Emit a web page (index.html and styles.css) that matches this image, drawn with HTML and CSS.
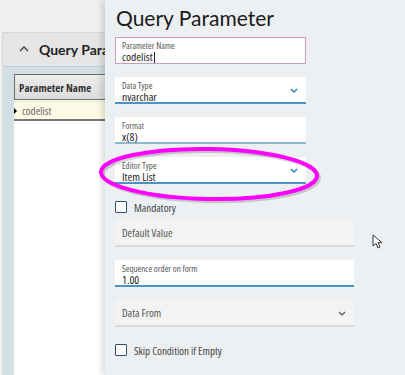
FILE: index.html
```html
<!DOCTYPE html>
<html lang="en">

<head>
    <meta charset="UTF-8">
    <meta name="viewport" content="width=device-width, initial-scale=1.0">
    <title>Query Parameter</title>
    <link rel="stylesheet" href="styles.css">
</head>

<body>
    <!-- page behind the drawer -->
    <div class="back">
        <div class="back-panel">
            <div class="back-header">
                <svg class="chev-up" width="10" height="6" viewBox="0 0 10 6">
                    <path d="M1 5 L5 1 L9 5" fill="none" stroke="#444" stroke-width="1.4" />
                </svg>
                <span>Query Parameters</span>
            </div>
            <div class="back-body">
                <div class="grid">
                    <div class="grid-head">Parameter Name</div>
                    <div class="grid-row">
                        <span class="row-mark"></span>
                        <span>codelist</span>
                    </div>
                </div>
            </div>
        </div>
    </div>

    <!-- drawer -->
    <section class="drawer">
        <h1>Query Parameter</h1>

        <div class="field field-focus w-short">
            <label>Parameter Name</label>
            <div class="value">codelist<span class="caret"></span></div>
        </div>

        <div class="field field-select w-short">
            <label>Data Type</label>
            <div class="value">nvarchar</div>
            <svg class="chev" width="8" height="5" viewBox="0 0 8 5">
                <path d="M1 1 L4 4 L7 1" fill="none" stroke="#2f7cb8" stroke-width="1.4" />
            </svg>
        </div>

        <div class="field field-light w-short">
            <label>Format</label>
            <div class="value">x(8)</div>
        </div>

        <div class="field field-select w-short">
            <label>Editor Type</label>
            <div class="value">Item List</div>
            <svg class="chev" width="8" height="5" viewBox="0 0 8 5">
                <path d="M1 1 L4 4 L7 1" fill="none" stroke="#2f7cb8" stroke-width="1.4" />
            </svg>
        </div>

        <label class="check">
            <span class="box"></span>
            Mandatory
        </label>

        <div class="field field-off w-long">
            <div class="placeholder">Default Value</div>
        </div>

        <div class="field field-select w-long">
            <label>Sequence order on form</label>
            <div class="value">1.00</div>
        </div>

        <div class="field field-off w-long">
            <div class="placeholder">Data From</div>
            <svg class="chev" width="8" height="5" viewBox="0 0 8 5">
                <path d="M1 1 L4 4 L7 1" fill="none" stroke="#555" stroke-width="1.2" />
            </svg>
        </div>

        <label class="check">
            <span class="box"></span>
            Skip Condition if Empty
        </label>

        <!-- highlight drawn over the editor type field -->
        <svg class="mark" width="230" height="64" viewBox="0 0 230 64">
            <ellipse cx="112" cy="31" rx="108" ry="25" fill="none" stroke="rgba(0,0,0,0.18)" stroke-width="4" transform="translate(2 2) rotate(1 112 31)" />
            <ellipse cx="112" cy="31" rx="108" ry="25" fill="none" stroke="#ff00ff" stroke-width="4" transform="rotate(1 112 31)" />
        </svg>

        <!-- mouse pointer -->
        <svg class="pointer" width="12" height="16" viewBox="0 0 12 16">
            <path d="M1 1 L1 12 L4 9.5 L6 14 L8 13 L6 8.7 L10 8.7 Z" fill="#fff" stroke="#333" stroke-width="1" />
        </svg>
    </section>
</body>

</html>
```

FILE: styles.css
```css
* {
    box-sizing: border-box;
    margin: 0;
    padding: 0;
}

body {
    display: flex;
    height: 375px;
    width: 405px;
    overflow: hidden;
    background-color: #eef0f2;
    font-family: 'Open Sans', 'Lato', sans-serif;
    font-stretch: 75%;
    color: #222;
}

/* back page */

.back {
    width: 105px;
    flex-shrink: 0;
    padding-top: 32px;
    padding-left: 2px;
    overflow: hidden;
}

.back-panel {
    width: 200px;
    height: 100%;
    display: flex;
    flex-direction: column;
    border-top: 1px solid #d6d6d6;
    border-left: 1px solid #d6d6d6;
}

.back-header {
    display: flex;
    align-items: center;
    height: 34px;
    padding-left: 16px;
    gap: 10px;
    background-color: #e5e5e5;
    border-bottom: 1px solid #b7d0d9;
    font-family: 'Lato', sans-serif;
    font-weight: 700;
    font-size: 14px;
    color: #222;
}

.chev-up {
    margin-top: -2px;
}

.back-body {
    flex: 1;
    background-color: #d3dfe4;
    padding: 7px 0 0 11px;
}

.grid {
    height: 100%;
    background-color: #fff;
}

.grid-head {
    height: 26px;
    display: flex;
    align-items: center;
    padding-left: 4px;
    background: linear-gradient(#ececec, #dcdcdc);
    border: 1px solid #6c6c6c;
    font-size: 11px;
    font-weight: 700;
    font-stretch: 87.5%;
    color: #333;
}

.grid-row {
    position: relative;
    height: 20px;
    margin-top: 1px;
    display: flex;
    align-items: center;
    padding-left: 8px;
    background-color: #fdfbe6;
    border-bottom: 2px solid #777;
    border-top: 1px solid #e8e6d0;
    font-size: 11px;
    color: #666;
}

.row-mark {
    position: absolute;
    left: 0;
    top: 6px;
    border-left: 3px solid #000;
    border-top: 3px solid transparent;
    border-bottom: 3px solid transparent;
}

/* drawer */

.drawer {
    position: relative;
    flex: 1;
    display: flex;
    flex-direction: column;
    padding: 5px 0 0 10px;
    background-color: #edf0f3;
    box-shadow: -4px 0 5px rgba(0, 0, 0, 0.12);
}

h1 {
    font-family: 'Lato', sans-serif;
    font-stretch: normal;
    font-size: 21px;
    font-weight: 400;
    line-height: 26px;
    color: #1a1a1a;
    margin-left: 1px;
    margin-bottom: 6px;
}

.field {
    position: relative;
    height: 27px;
    padding: 4px 0 0 7px;
    background-color: #fff;
    margin-bottom: 13px;
    flex-shrink: 0;
}

.w-short {
    width: 191px;
}

.w-long {
    width: 239px;
}

.field label {
    display: block;
    font-size: 9px;
    line-height: 10px;
    color: #555;
}

.field .value {
    font-size: 11.5px;
    line-height: 12px;
    color: #1c1c1c;
}

.caret {
    display: inline-block;
    width: 1px;
    height: 11px;
    margin-left: 1px;
    vertical-align: -2px;
    background-color: #222;
}

.field-focus {
    border: 1px solid #cf9cbd;
    padding: 3px 0 0 6px;
}

.field-select {
    border-bottom: 2px solid #4c92c5;
}

.field-light {
    border-bottom: 2px solid #8db8d1;
}

.field-off {
    background-color: #f3f3f3;
    border-bottom: 2px solid #d8dadc;
    padding-top: 0;
    display: flex;
    align-items: center;
}

.placeholder {
    font-size: 11px;
    color: #555;
}

.chev {
    position: absolute;
    right: 8px;
    top: 11px;
}

.check {
    display: flex;
    align-items: center;
    gap: 7px;
    height: 12px;
    margin: 4px 0 7px;
    font-size: 11px;
    color: #444;
    flex-shrink: 0;
}

.box {
    width: 12px;
    height: 12px;
    border: 1.5px solid #2d4f78;
    border-radius: 1px;
    background-color: #fff;
}

.mark {
    position: absolute;
    left: -8px;
    top: 143px;
}

.pointer {
    position: absolute;
    left: 267px;
    top: 234px;
}
```
